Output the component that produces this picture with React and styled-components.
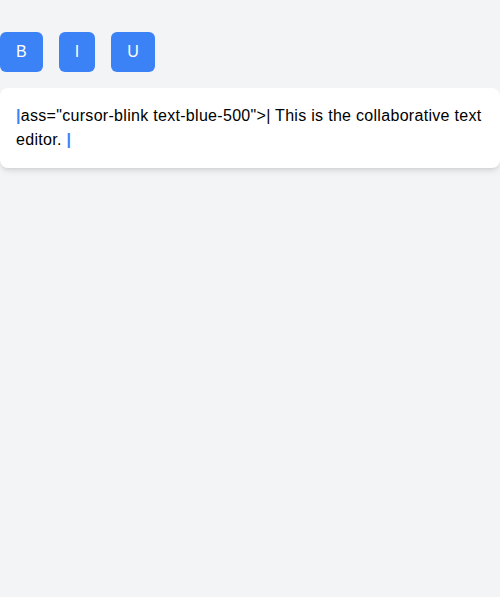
import React from "react";
import styled, { createGlobalStyle } from "styled-components";

const Global = createGlobalStyle`
  html, body { margin: 0; padding: 0; background: #f3f4f6; }
  body { font-family: "Liberation Sans", Arial, sans-serif; color: #000; }
`;

const Page = styled.div`
  padding-top: 32px;
  min-height: 597px;
  box-sizing: border-box;
`;

const Toolbar = styled.div`
  display: flex;
  gap: 16px;
  margin-bottom: 16px;
`;

const ToolButton = styled.button`
  background: #3b82f6;
  color: #fff;
  border: none;
  border-radius: 6px;
  padding: 8px 16px;
  font-family: inherit;
  font-size: 16px;
  line-height: 24px;
  cursor: pointer;
`;

const Editor = styled.div`
  background: #fff;
  border-radius: 8px;
  padding: 16px;
  font-size: 16px;
  line-height: 24px;
  letter-spacing: 0.3px;
  box-shadow: 0 4px 6px -1px rgba(0, 0, 0, 0.1), 0 2px 4px -2px rgba(0, 0, 0, 0.1);
`;

const Cursor = styled.span`
  color: #3b82f6;
  font-weight: 700;
`;

export default function App() {
  return (
    <>
      <Global />
      <Page>
        <Toolbar>
          <ToolButton>B</ToolButton>
          <ToolButton>I</ToolButton>
          <ToolButton>U</ToolButton>
        </Toolbar>
        <Editor>
          <Cursor>|</Cursor>ass="cursor-blink text-blue-500"&gt;| This is the collaborative text editor. <Cursor>|</Cursor>
        </Editor>
      </Page>
    </>
  );
}
